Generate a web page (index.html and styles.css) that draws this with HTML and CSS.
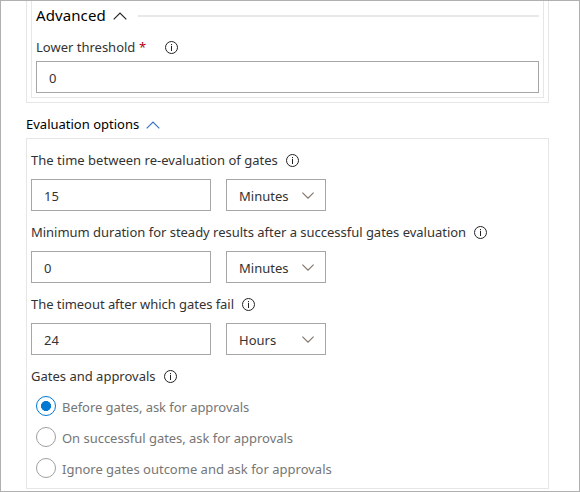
FILE: index.html
```
<!DOCTYPE html>
<html lang="en">
<head>
<meta charset="utf-8">
<title>Gates</title>
<link rel="stylesheet" href="styles.css">
</head>
<body>
<svg class="defs" aria-hidden="true">
  <symbol id="info" viewBox="0 0 14 14"><circle cx="7.5" cy="7.5" r="6" fill="none" stroke="currentColor"/><path d="M7.5 6v5M7.5 4v1.2" stroke="currentColor"/></symbol>
  <symbol id="up" viewBox="0 0 14 8"><path d="M.7 7.3 7 1l6.3 6.3" fill="none" stroke="currentColor" stroke-width="1.2"/></symbol>
  <symbol id="down" viewBox="0 0 12 7"><path d="M.4.6 6 6.2 11.6.6" fill="none" stroke="currentColor" stroke-width="1.1"/></symbol>
</svg>
<main class="frame">
  <section class="outer">
    <div class="inner">
      <div class="advanced"><span class="adv-text">Advanced</span><svg class="chev"><use href="#up"/></svg><span class="rule"></span></div>
      <div class="label threshold"><span class="t-lower">Lower threshold</span><span class="req">*</span><svg class="info"><use href="#info"/></svg></div>
      <div class="field">0</div>
    </div>
  </section>
  <div class="eval-head"><span class="t-eval">Evaluation options</span><svg class="chev blue"><use href="#up"/></svg></div>
  <section class="panel">
    <div class="label"><span class="t-time">The time between re-evaluation of gates</span><svg class="info"><use href="#info"/></svg></div>
    <div class="row"><div class="field">15</div><div class="field select"><span>Minutes</span><svg class="down"><use href="#down"/></svg></div></div>
    <div class="label"><span class="t-min">Minimum duration for steady results after a successful gates evaluation</span><svg class="info"><use href="#info"/></svg></div>
    <div class="row"><div class="field">0</div><div class="field select"><span>Minutes</span><svg class="down"><use href="#down"/></svg></div></div>
    <div class="label"><span class="t-out">The timeout after which gates fail</span><svg class="info"><use href="#info"/></svg></div>
    <div class="row"><div class="field">24</div><div class="field select"><span>Hours</span><svg class="down"><use href="#down"/></svg></div></div>
    <div class="label"><span class="t-gates">Gates and approvals</span><svg class="info"><use href="#info"/></svg></div>
    <div class="radios">
      <div class="option"><span class="radio on"></span><span class="t-before">Before gates, ask for approvals</span></div>
      <div class="option"><span class="radio"></span><span class="t-on">On successful gates, ask for approvals</span></div>
      <div class="option"><span class="radio"></span><span class="t-ignore">Ignore gates outcome and ask for approvals</span></div>
    </div>
  </section>
</main>
</body>
</html>
```
FILE: styles.css
```
* { box-sizing: border-box; }
body { margin: 0; background: #fff; }
.defs { position: absolute; width: 0; height: 0; }
.frame { width: 580px; height: 492px; border: 1px solid #b0b0b0; padding: 0 30px 0 25px; overflow: hidden; font: 13px/20px "Noto Sans", sans-serif; color: #333; white-space: nowrap; }
.frame svg { flex: none; display: block; overflow: visible; }
.outer { width: 523px; height: 102px; border: 1px solid #e6e6e6; border-top: 0; padding: 0 4px 4px; }
.inner { height: 97px; border: 1px solid #e6e6e6; border-top: 0; padding: 0 4px; }
.advanced { display: flex; align-items: center; height: 29px; font-size: 15px; color: #000; }
.adv-text { width: 77px; padding-bottom: 2px; letter-spacing: .1px; }
.chev { width: 14px; height: 8px; color: #222; }
.advanced .chev { margin-top: 1px; }
.rule { flex: 1; height: 2px; margin-left: 11px; background: #e8e8e8; }
.label { display: flex; align-items: center; height: 20px; }
.label span { flex: none; }
.threshold { margin: 7px 0 4px; }
.req { color: #b00010; margin-left: 4px; width: 6px; }
.info { width: 14px; height: 14px; color: #222; }
.field { height: 32px; border: 1px solid #a6a6a6; padding: 1px 12px 0; line-height: 30px; }
.eval-head { display: flex; align-items: center; height: 20px; margin: 12px 0 3px; color: #000; }
.blue { color: #3673c4; }
.panel { width: 523px; height: 351px; border: 1px solid #e6e6e6; padding: 11px 4px 0; }
.row { display: flex; gap: 15px; margin: 9px 0 11px; }
.row .field { width: 180px; }
.row .select { width: 100px; display: flex; align-items: center; justify-content: space-between; padding: 1px 11px 0 12px; }
.down { width: 12px; height: 7px; color: #807068; }
.radios { padding: 10px 0 0 5px; }
.option { display: flex; align-items: center; gap: 6px; height: 20px; margin-bottom: 11px; color: #767676; }
.option span:last-child { padding-top: 2px; }
.radio { flex: none; width: 20px; height: 20px; border: 1px solid #a0a0a0; border-radius: 50%; }
.on { border-color: #0078d4; background: radial-gradient(circle, #0078d4 4.7px, #fff 5.3px); }
.t-lower { width: 99px; }
.threshold .info { margin-left: 19px; }
.t-eval { width: 120px; padding-bottom: 2px; }
.t-time { width: 254px; letter-spacing: .02px; }
.t-min { width: 442px; letter-spacing: -.02px; }
.t-out { width: 210px; letter-spacing: -.05px; }
.t-gates { width: 132px; }
.t-before { letter-spacing: -.05px; }
.t-on { letter-spacing: -.03px; }
```
